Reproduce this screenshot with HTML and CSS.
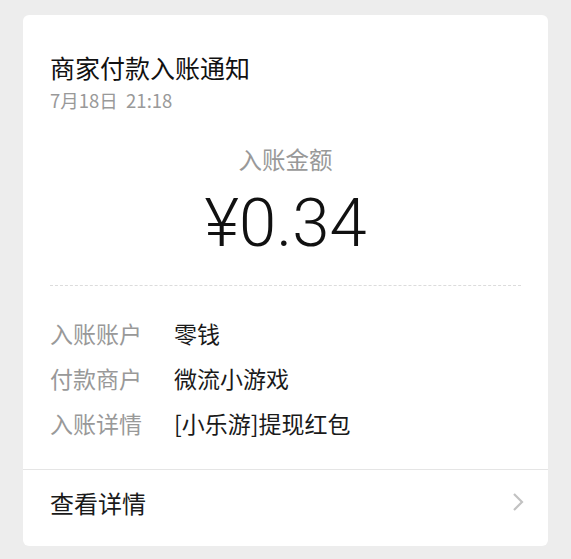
FILE: index.html
```html
<!DOCTYPE html>
<html lang="zh-CN">
<head>
    <meta charset="UTF-8">
    <title>商家付款入账通知</title>
<link rel="stylesheet" href="styles.css">
</head>
<body>

<section class="notice">
    <div class="card">
        <div class="card-body">
            <h2 class="title">商家付款入账通知</h2>
            <p class="time">7月18日&nbsp;&nbsp;21:18</p>

            <div class="amount-box">
                <p class="amount-label">入账金额</p>
                <p class="amount">¥0.34</p>
            </div>

            <div class="dash"></div>

            <table class="detail">
                <tr>
                    <td class="key">入账账户</td>
                    <td class="val">零钱</td>
                </tr>
                <tr>
                    <td class="key">付款商户</td>
                    <td class="val">微流小游戏</td>
                </tr>
                <tr>
                    <td class="key">入账详情</td>
                    <td class="val">[小乐游]提现红包</td>
                </tr>
            </table>
        </div>

        <div class="more">
            <span>查看详情</span>
            <svg class="arrow" width="12" height="20" viewBox="0 0 12 20">
                <path d="M2 2 L10 10 L2 18" fill="none" stroke="#c2c2c2" stroke-width="2.2"/>
            </svg>
        </div>
    </div>
</section>

</body>
</html>
```

FILE: styles.css
```css
body {
  margin: 0;
  background-color: #ededed;
  font-family: "Noto Sans CJK SC", "Liberation Sans", sans-serif;
  color: #1a1a1a;
}

.notice {
  padding: 15px 23px 13px 23px;
}

.card {
  background-color: #fff;
  border-radius: 6px;
  height: 531px;
  display: flex;
  flex-direction: column;
}

.card-body {
  flex: 1;
  padding: 35px 27px 0 27px;
}

.title {
  margin: 0;
  font-size: 25px;
  font-weight: normal;
  line-height: 34px;
  color: #111;
}

.time {
  margin: 4px 0 0 0;
  font-size: 18.5px;
  line-height: 24px;
  color: #999;
}

.amount-box {
  text-align: center;
  margin-top: 32px;
}

.amount-label {
  margin: 0;
  font-size: 23.5px;
  line-height: 30px;
  color: #999;
}

.amount {
  margin: 9px 0 0 0;
  font-family: "Roboto", "Liberation Sans", sans-serif;
  font-size: 67px;
  line-height: 80px;
  font-weight: 300;
  color: #111;
}

.dash {
  margin-top: 22px;
  border-top: 1px dashed #dcdcdc;
}

.detail {
  margin-top: 24px;
  border-collapse: collapse;
  font-size: 23px;
}

.detail td {
  padding: 0;
  height: 45px;
}

.key {
  width: 124px;
  color: #999;
}

.val {
  color: #1a1a1a;
}

.more {
  box-sizing: border-box;
  height: 77px;
  border-top: 1px solid #e5e5e5;
  padding: 0 24px 12px 27px;
  display: flex;
  align-items: center;
  justify-content: space-between;
  font-size: 24px;
}
```
